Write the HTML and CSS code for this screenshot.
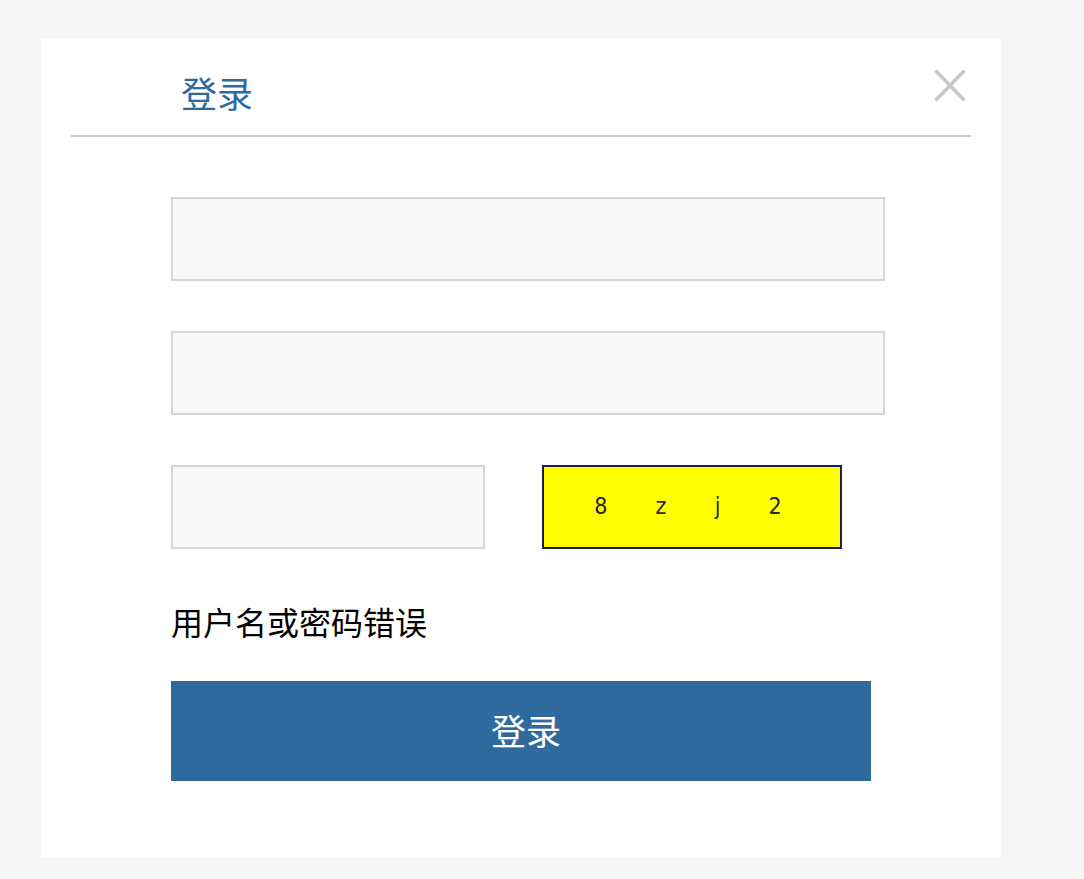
FILE: index.html
```html
<!DOCTYPE html>
<html lang="zh-CN">
<head>
<meta charset="utf-8">
<title>登录</title>
<link rel="stylesheet" href="styles.css">
</head>
<body>
<div class="card">
  <div class="header">
    <h1 class="title">登录</h1>
    <button class="close" type="button" aria-label="关闭">
      <svg width="32" height="33" viewBox="0 0 32 33"><path d="M1.5 1.5 L30.5 31.5 M30.5 1.5 L1.5 31.5" stroke="#c8c8c8" stroke-width="3.6" fill="none"/></svg>
    </button>
  </div>
  <form class="form">
    <input class="field field-wide" type="text">
    <input class="field field-wide" type="password">
    <div class="captcha-row">
      <input class="field field-short" type="text">
      <div class="captcha"><span>8</span><span>z</span><span>j</span><span>2</span></div>
    </div>
    <p class="error">用户名或密码错误</p>
    <button class="submit" type="button">登录</button>
  </form>
</div>
</body>
</html>
```
FILE: styles.css
```css
html, body {
  margin: 0;
  padding: 0;
  background: #f5f5f5;
  font-family: "Noto Sans CJK SC", "Noto Sans", sans-serif;
}

.card {
  margin: 38px 0 0 41px;
  width: 960px;
  height: 820px;
  box-sizing: border-box;
  padding: 0 30px;
  background: #ffffff;
}

.header {
  display: flex;
  justify-content: space-between;
  align-items: flex-start;
  height: 99px;
  box-sizing: border-box;
  border-bottom: 2px solid #cccccc;
}

.title {
  margin: 36px 0 0 110px;
  font-size: 36px;
  line-height: 36px;
  font-weight: normal;
  color: #2e6a9f;
}

.close {
  margin: 31px 5px 0 0;
  padding: 0;
  border: none;
  background: none;
  width: 32px;
  height: 33px;
  display: block;
}
.close svg { display: block; }

.form {
  display: flex;
  flex-direction: column;
  align-items: flex-start;
  padding: 60px 0 0 100px;
}

.field {
  box-sizing: border-box;
  height: 84px;
  margin: 0 0 50px 0;
  padding: 0 12px;
  border: 2px solid #d2d6d9;
  background: #f8f8f8;
  font-size: 20px;
  font-family: inherit;
  outline: none;
}
.field-wide { width: 714px; }
.field-short { width: 314px; margin: 0; }

.captcha-row {
  display: flex;
  gap: 57px;
}

.captcha {
  box-sizing: border-box;
  width: 300px;
  height: 84px;
  border: 2px solid #1c1c55;
  background: #ffff00;
  display: flex;
  justify-content: space-evenly;
  align-items: center;
  padding: 0 10px 2px 2px;
  font-family: "DejaVu Sans Condensed", "DejaVu Sans", sans-serif;
  font-stretch: condensed;
  font-size: 23px;
  color: #2b2b2b;
}

.error {
  margin: 56px 0 44px 0;
  font-size: 32px;
  line-height: 32px;
  color: #000000;
}

.submit {
  width: 700px;
  height: 100px;
  border: none;
  background: #2e6a9d;
  color: #ffffff;
  font-family: inherit;
  font-size: 35px;
  padding: 0 0 4px 10px;
}
```
